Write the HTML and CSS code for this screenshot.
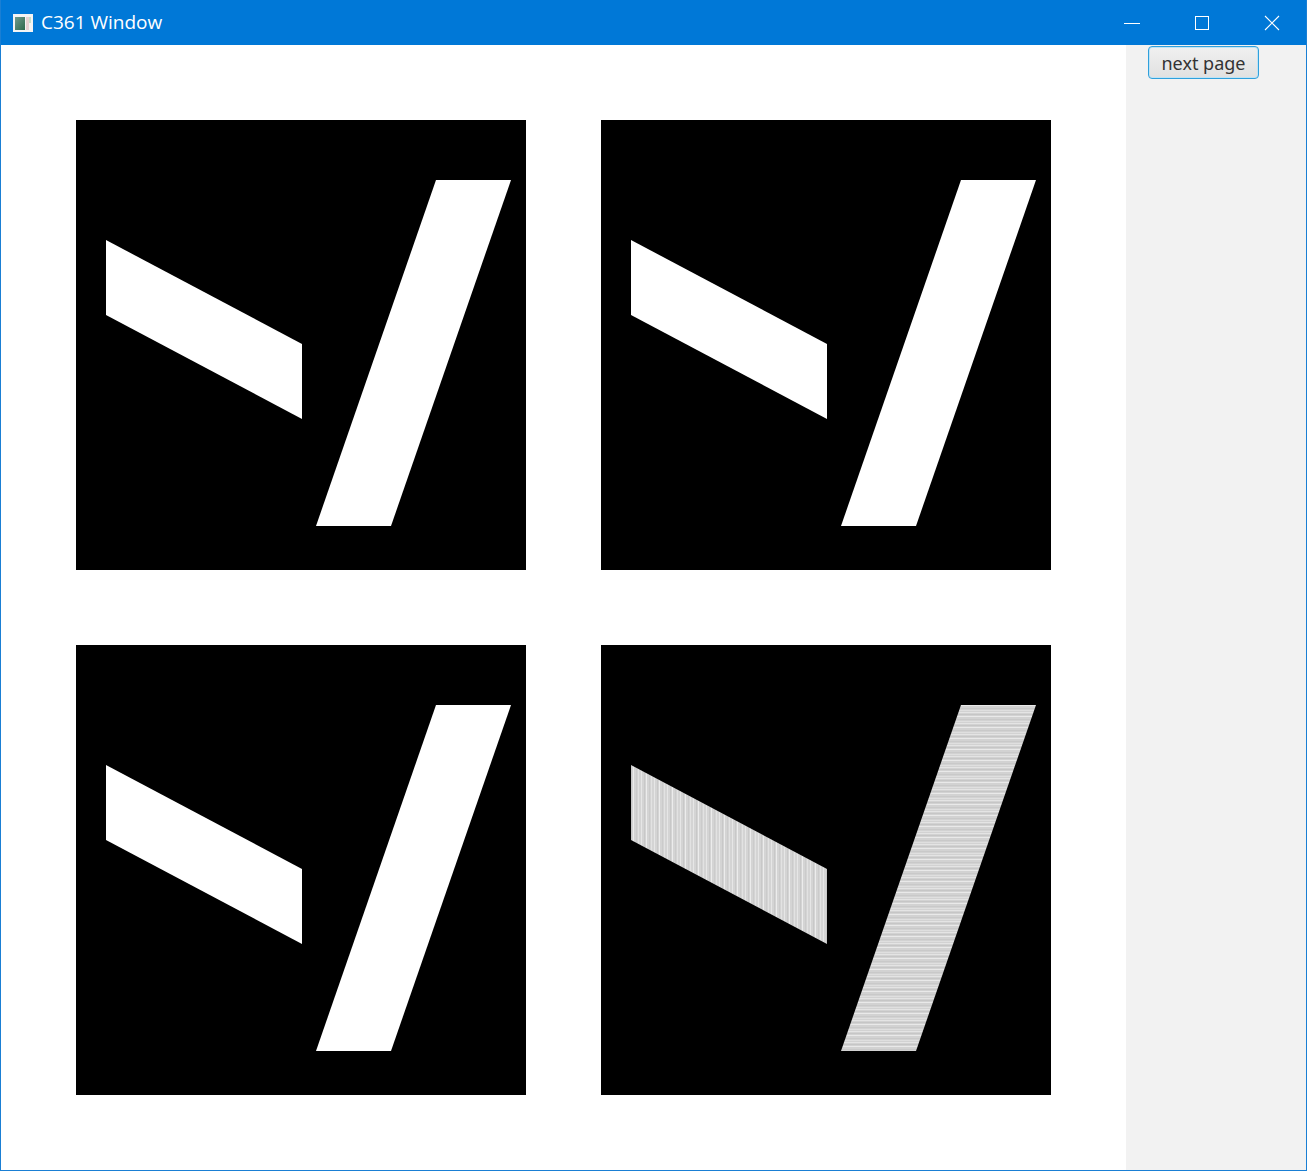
FILE: index.html
```html
<!DOCTYPE html>
<html>
<head>
<meta charset="utf-8">
<link rel="stylesheet" href="styles.css">
</head>
<body>
<div class="window">
  <div class="titlebar">
    <div class="title-left">
      <svg class="app-icon" width="20" height="18" viewBox="0 0 20 18">
        <defs>
          <linearGradient id="ig" x1="0" y1="0" x2="1" y2="1">
            <stop offset="0" stop-color="#6f9a8e"/>
            <stop offset="1" stop-color="#2f6a4c"/>
          </linearGradient>
        </defs>
        <rect x="0" y="0" width="20" height="18" fill="#f4f4f4"/>
        <rect x="2" y="3" width="10" height="13" fill="url(#ig)"/>
        <rect x="13" y="3" width="3" height="13" fill="#e8d2d2"/>
        <rect x="16" y="3" width="2" height="6" fill="#c8e0c8"/>
      </svg>
      <span class="title">C361 Window</span>
    </div>
    <div class="controls">
      <div class="ctl">
        <svg width="16" height="16" viewBox="0 0 16 16"><path d="M0 8.5H16" stroke="#fff" stroke-width="1"/></svg>
      </div>
      <div class="ctl">
        <svg width="16" height="16" viewBox="0 0 16 16"><rect x="1.5" y="1.5" width="13" height="13" fill="none" stroke="#fff" stroke-width="1"/></svg>
      </div>
      <div class="ctl">
        <svg width="16" height="16" viewBox="0 0 16 16"><path d="M1 1L15 15M15 1L1 15" stroke="#fff" stroke-width="1.1"/></svg>
      </div>
    </div>
  </div>
  <div class="body">
    <div class="canvas">
      <svg class="tile" width="450" height="450" viewBox="0 0 450 450">
        <rect width="450" height="450" fill="#000"/>
        <polygon points="30,120 226,224 226,299 30,195" fill="#fff"/>
        <polygon points="360,60 435,60 315,406 240,406" fill="#fff"/>
      </svg>
      <svg class="tile" width="450" height="450" viewBox="0 0 450 450">
        <rect width="450" height="450" fill="#000"/>
        <polygon points="30,120 226,224 226,299 30,195" fill="#fff"/>
        <polygon points="360,60 435,60 315,406 240,406" fill="#fff"/>
      </svg>
      <svg class="tile" width="450" height="450" viewBox="0 0 450 450">
        <rect width="450" height="450" fill="#000"/>
        <polygon points="30,120 226,224 226,299 30,195" fill="#fff"/>
        <polygon points="360,60 435,60 315,406 240,406" fill="#fff"/>
      </svg>
      <svg class="tile" width="450" height="450" viewBox="0 0 450 450">
        <defs>
          <pattern id="vstripe" x="0" y="0" width="13" height="10" patternUnits="userSpaceOnUse">
            <rect width="13" height="10" fill="#d4d4d4"/>
            <rect x="1" width="1" height="10" fill="#e6e6e6"/>
            <rect x="4" width="1" height="10" fill="#c8c8c8"/>
            <rect x="6" width="1" height="10" fill="#ececec"/>
            <rect x="9" width="1" height="10" fill="#cbcbcb"/>
            <rect x="11" width="1" height="10" fill="#e2e2e2"/>
          </pattern>
          <pattern id="hstripe" x="0" y="0" width="10" height="11" patternUnits="userSpaceOnUse">
            <rect width="10" height="11" fill="#d2d2d2"/>
            <rect y="1" width="10" height="1" fill="#e4e4e4"/>
            <rect y="3" width="10" height="1" fill="#c6c6c6"/>
            <rect y="5" width="10" height="1" fill="#e9e9e9"/>
            <rect y="8" width="10" height="1" fill="#c9c9c9"/>
            <rect y="10" width="10" height="1" fill="#dfdfdf"/>
          </pattern>
        </defs>
        <rect width="450" height="450" fill="#000"/>
        <polygon points="30,120 226,224 226,299 30,195" fill="url(#vstripe)"/>
        <polygon points="360,60 435,60 315,406 240,406" fill="url(#hstripe)"/>
      </svg>
    </div>
    <div class="side">
      <button class="btn">next page</button>
    </div>
  </div>
</div>
</body>
</html>
```
FILE: styles.css
```css
html, body {
  margin: 0;
  padding: 0;
  background: #fff;
}
.window {
  width: 1307px;
  height: 1171px;
  box-sizing: border-box;
  border: 1px solid #1a7fd4;
  border-top: none;
  display: flex;
  flex-direction: column;
  overflow: hidden;
}
.titlebar {
  height: 45px;
  margin: 0 -1px;
  background: #0078d7;
  display: flex;
  align-items: center;
  justify-content: space-between;
  flex: none;
}
.title-left {
  display: flex;
  align-items: center;
  padding-left: 13px;
}
.app-icon {
  display: block;
}
.title {
  color: #fff;
  font-family: "Open Sans", "Noto Sans", sans-serif;
  font-size: 19px;
  margin-left: 8px;
  margin-top: -1px;
}
.controls {
  display: flex;
  height: 45px;
}
.ctl {
  width: 70px;
  height: 45px;
  display: flex;
  align-items: center;
  justify-content: center;
}
.ctl svg {
  display: block;
}
.body {
  flex: 1;
  display: flex;
}
.canvas {
  width: 1125px;
  box-sizing: border-box;
  padding: 75px;
  display: grid;
  grid-template-columns: 450px 450px;
  grid-template-rows: 450px 450px;
  gap: 75px;
  background: #fff;
}
.tile {
  display: block;
}
.side {
  flex: 1;
  background: #f2f2f2;
  padding: 1px 0 0 22px;
}
.btn {
  width: 111px;
  height: 33px;
  padding: 0;
  border: 1px solid #2fa0dc;
  border-radius: 4px;
  background: linear-gradient(#f0f0f0, #e1e1e1);
  box-shadow: inset 0 0 0 1px #bfe3f5;
  font-family: "Noto Sans", "Open Sans", sans-serif;
  font-size: 18px;
  color: #333;
  line-height: 1;
}
```
